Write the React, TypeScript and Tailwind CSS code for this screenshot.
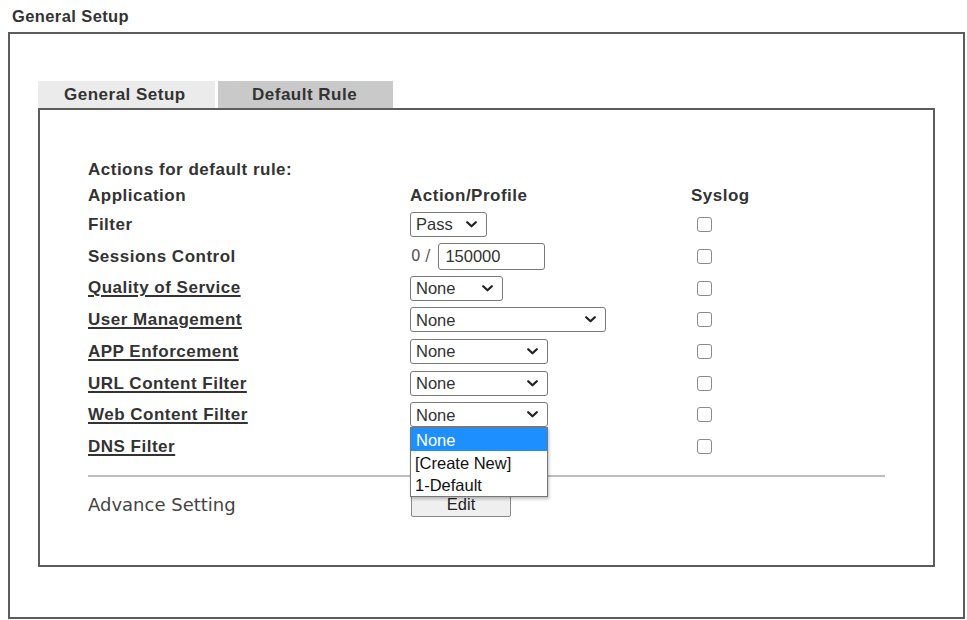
import React from 'react';

type Row = {
  label: string;
  link?: boolean;
  control: React.ReactNode;
};

function Chevron() {
  return (
    <svg width="11" height="7" viewBox="0 0 11 7" className="shrink-0">
      <path d="M1.2 1.2 L5.5 5.3 L9.8 1.2" fill="none" stroke="#222" strokeWidth="2.2" strokeLinecap="round" strokeLinejoin="round" />
    </svg>
  );
}

function Select({ value, width, children }: { value: string; width: string; children?: React.ReactNode }) {
  return (
    <div className={`relative ${width}`}>
      <div className="h-[25px] w-full flex items-center justify-between pl-[5px] pr-[9px] bg-white border border-[#7a7a7a] rounded-[3px] text-[16.5px] text-[#333] font-['Liberation_Sans',Arial,sans-serif]">
        <span>{value}</span>
        <Chevron />
      </div>
      {children}
    </div>
  );
}

function Check() {
  return <div className="ml-[6px] w-[15px] h-[15px] rounded-[3px] border border-[#8a8a8a] bg-white" />;
}

export default function App() {
  const rows: Row[] = [
    { label: 'Filter', control: <Select value="Pass" width="w-[77px]" /> },
    {
      label: 'Sessions Control',
      control: (
        <div className="flex items-center">
          <span className="text-[15px] text-[#555] font-['DejaVu_Sans',sans-serif] mr-[8px] ml-[1px]">0 /</span>
          <div className="h-[27px] w-[107px] flex items-center pl-[6px] border border-[#7a7a7a] rounded-[3px] text-[16.5px] text-[#333]">150000</div>
        </div>
      ),
    },
    { label: 'Quality of Service', link: true, control: <Select value="None" width="w-[93px]" /> },
    { label: 'User Management', link: true, control: <Select value="None" width="w-[196px]" /> },
    { label: 'APP Enforcement', link: true, control: <Select value="None" width="w-[138px]" /> },
    { label: 'URL Content Filter', link: true, control: <Select value="None" width="w-[138px]" /> },
    {
      label: 'Web Content Filter',
      link: true,
      control: (
        <Select value="None" width="w-[138px]">
          {/* open option list */}
          <div className="absolute left-0 top-full z-10 w-[138px] bg-white border border-[#777] shadow-[1px_2px_3px_rgba(0,0,0,0.25)] text-[16.5px] text-[#111]">
            <div className="h-[23px] flex items-center pl-[5px] bg-[#1e8fff] text-white">None</div>
            <div className="h-[23px] flex items-center pl-[4px]">[Create New]</div>
            <div className="h-[22px] flex items-center pl-[4px]">1-Default</div>
          </div>
        </Select>
      ),
    },
    { label: 'DNS Filter', link: true, control: null },
  ];

  return (
    <div className="w-[967px] h-[620px] bg-white font-['Liberation_Sans',Arial,sans-serif] text-[#333]">
      <div className="h-[32px] pl-[12px] pt-[6px] text-[16.5px] tracking-[0.4px] leading-[20px] font-bold">General Setup</div>

      <div className="ml-[8px] w-[957px] h-[587px] border-2 border-[#5c5c5c] pt-[47px] pl-[28px]">
        {/* tabs */}
        <div className="flex gap-[3px] h-[27px] text-[17px] tracking-[0.5px] font-bold">
          <div className="w-[177px] bg-[#ebebeb] flex items-center pl-[26px]">General Setup</div>
          <div className="w-[175px] bg-[#c9c9c9] flex items-center pl-[34px]">Default Rule</div>
        </div>

        <div className="w-[897px] h-[459px] border-2 border-[#5c5c5c] pt-[47px] pl-[48px]">
          <div className="grid grid-cols-[322px_281px_1fr] text-[17px] tracking-[0.5px] font-bold">
            <div className="col-span-3 h-[25px] flex items-center">Actions for default rule:</div>
            <div className="h-[27px] flex items-center">Application</div>
            <div className="h-[27px] flex items-center">Action/Profile</div>
            <div className="h-[27px] flex items-center">Syslog</div>

            {rows.map((r) => (
              <React.Fragment key={r.label}>
                <div className="h-[31.7px] flex items-center">
                  <span className={r.link ? 'underline underline-offset-2 decoration-[1.5px]' : ''}>{r.label}</span>
                </div>
                <div className="h-[31.7px] flex items-center font-normal tracking-normal">{r.control}</div>
                <div className="h-[31.7px] flex items-center">
                  <Check />
                </div>
              </React.Fragment>
            ))}
          </div>

          <div className="mt-[12px] w-[797px] h-0 border-t-2 border-[#bdbdbd]" />

          <div className="mt-[14px] h-[27px] flex items-center">
            <div className="w-[322px] text-[18px] text-[#444] font-['DejaVu_Sans',sans-serif]">Advance Setting</div>
            <div className="w-[100px] h-[25px] ml-[1px] flex items-center justify-center bg-[#efefef] border border-[#8a8a8a] rounded-[2px] text-[16.5px] text-[#222]">
              Edit
            </div>
          </div>
        </div>
      </div>
    </div>
  );
}
